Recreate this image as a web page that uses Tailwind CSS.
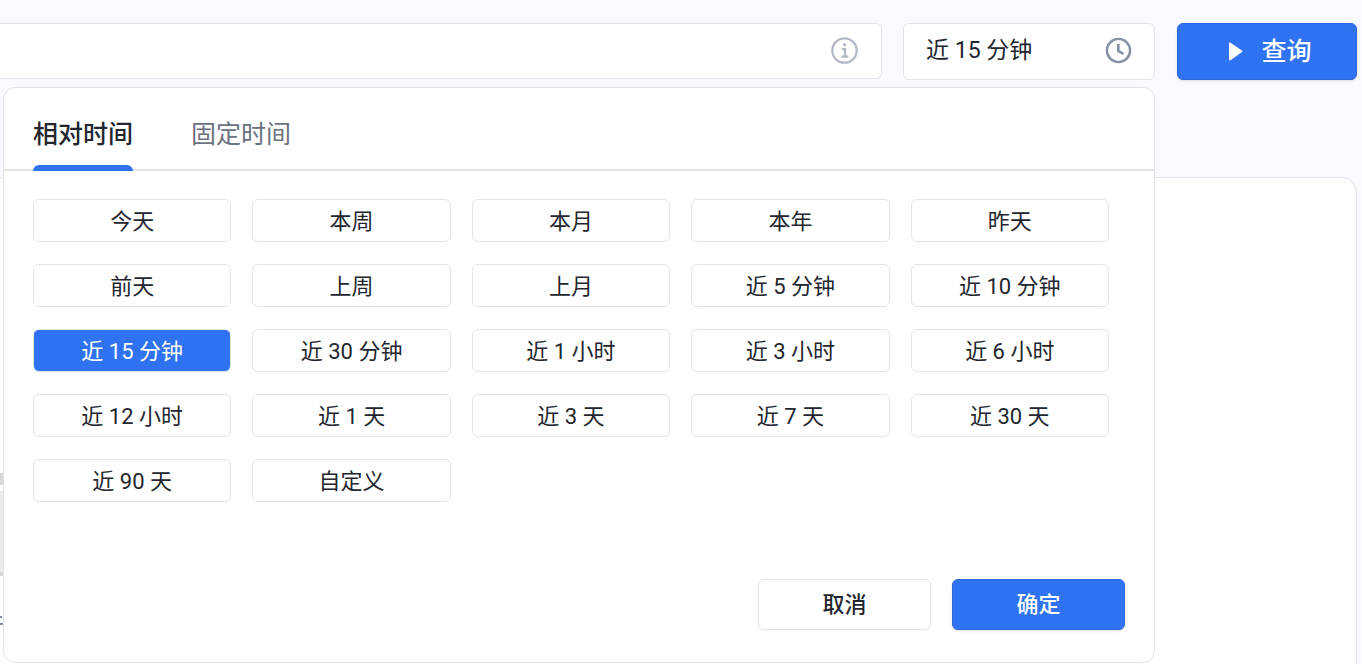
<!DOCTYPE html>
<html lang="zh-CN">
<head>
  <meta charset="UTF-8">
  <meta name="viewport" content="width=device-width, initial-scale=1.0">
  <title>查询</title>
  <script src="https://cdn.jsdelivr.net/npm/@tailwindcss/browser@4"></script>
</head>
<body class="h-screen overflow-hidden flex flex-col bg-[#f9faff] text-[#23262e] font-[Roboto,'Noto_Sans_CJK_SC',sans-serif]">
  <!-- Query bar -->
  <header class="flex items-start pt-[23px] pr-[5px]">
    <div class="flex flex-1 items-center h-14 pr-[23px] bg-white border border-l-0 border-[#e3e4ea] rounded-r-md">
      <input type="text" aria-label="查询语句" class="flex-1 min-w-0 h-full px-4 text-[23px] outline-none">
      <svg class="size-[27px] overflow-visible text-[#b3b8c6]" viewBox="0 1 27 27" fill="none" stroke="currentColor" stroke-width="2.2">
        <circle cx="13.5" cy="13.5" r="12.2"/>
        <circle cx="13.7" cy="7.7" r="1.6" fill="currentColor" stroke="none"/>
        <path d="M10.8 12h3.2v7.6M10.5 19.6h6.8"/>
      </svg>
    </div>

    <!-- Time picker -->
    <div class="relative ml-[21px]">
      <button type="button" id="timeBtn" aria-haspopup="dialog" aria-expanded="true" class="flex items-center justify-between w-[252px] h-[57px] px-[22px] bg-white border border-[#e3e4ea] rounded-md text-[23px]">
        <span id="timeLabel">近 15 分钟</span>
        <svg class="size-[27px] overflow-visible text-[#8590a2]" viewBox="0 1 27 27" fill="none" stroke="currentColor" stroke-width="2.4">
          <circle cx="13.5" cy="13.5" r="11.6"/>
          <path d="M13.3 7v6.9l5.2 3.1" stroke-width="2.6"/>
        </svg>
      </button>

      <div id="timePanel" role="dialog" aria-label="选择时间" class="absolute z-10 right-0 top-full mt-[7px] w-[1152px] bg-white border border-[#e3e4ea] rounded-xl">
        <div role="tablist" class="flex items-stretch gap-[58px] h-[83px] px-[29px] border-b-2 border-[#e3e4ea] text-[25px]">
          <button type="button" role="tab" aria-selected="true" class="relative pt-3 font-medium after:absolute after:inset-x-0 after:-bottom-0.5 after:h-1.5 after:rounded-t-md after:bg-[#3073f2]">相对时间</button>
          <button type="button" role="tab" aria-selected="false" class="pt-3 text-[#6a7180]">固定时间</button>
        </div>

        <div id="options" class="grid grid-cols-5 gap-x-[21px] gap-y-[22px] pt-7 pl-[29px] pr-[45px] text-[22px]">
          <button type="button" class="h-[43px] pt-0.5 border border-[#e3e4ea] rounded-md">今天</button>
          <button type="button" class="h-[43px] pt-0.5 border border-[#e3e4ea] rounded-md">本周</button>
          <button type="button" class="h-[43px] pt-0.5 border border-[#e3e4ea] rounded-md">本月</button>
          <button type="button" class="h-[43px] pt-0.5 border border-[#e3e4ea] rounded-md">本年</button>
          <button type="button" class="h-[43px] pt-0.5 border border-[#e3e4ea] rounded-md">昨天</button>
          <button type="button" class="h-[43px] pt-0.5 border border-[#e3e4ea] rounded-md">前天</button>
          <button type="button" class="h-[43px] pt-0.5 border border-[#e3e4ea] rounded-md">上周</button>
          <button type="button" class="h-[43px] pt-0.5 border border-[#e3e4ea] rounded-md">上月</button>
          <button type="button" class="h-[43px] pt-0.5 border border-[#e3e4ea] rounded-md">近 5 分钟</button>
          <button type="button" class="h-[43px] pt-0.5 border border-[#e3e4ea] rounded-md">近 10 分钟</button>
          <button type="button" class="h-[43px] pt-0.5 border border-[#e3e4ea] rounded-md bg-[#3073f2] text-white">近 15 分钟</button>
          <button type="button" class="h-[43px] pt-0.5 border border-[#e3e4ea] rounded-md">近 30 分钟</button>
          <button type="button" class="h-[43px] pt-0.5 border border-[#e3e4ea] rounded-md">近 1 小时</button>
          <button type="button" class="h-[43px] pt-0.5 border border-[#e3e4ea] rounded-md">近 3 小时</button>
          <button type="button" class="h-[43px] pt-0.5 border border-[#e3e4ea] rounded-md">近 6 小时</button>
          <button type="button" class="h-[43px] pt-0.5 border border-[#e3e4ea] rounded-md">近 12 小时</button>
          <button type="button" class="h-[43px] pt-0.5 border border-[#e3e4ea] rounded-md">近 1 天</button>
          <button type="button" class="h-[43px] pt-0.5 border border-[#e3e4ea] rounded-md">近 3 天</button>
          <button type="button" class="h-[43px] pt-0.5 border border-[#e3e4ea] rounded-md">近 7 天</button>
          <button type="button" class="h-[43px] pt-0.5 border border-[#e3e4ea] rounded-md">近 30 天</button>
          <button type="button" class="h-[43px] pt-0.5 border border-[#e3e4ea] rounded-md">近 90 天</button>
          <button type="button" class="h-[43px] pt-0.5 border border-[#e3e4ea] rounded-md">自定义</button>
        </div>

        <div class="flex justify-end gap-[21px] pt-[77px] pb-8 pr-[29px] text-[22px] font-medium">
          <button type="button" id="cancelBtn" class="w-[173px] h-[51px] border border-[#e3e4ea] rounded-md shadow-xs">取消</button>
          <button type="button" id="okBtn" class="w-[173px] h-[51px] border border-[#2d68dd] rounded-md bg-[#3073f2] text-white shadow-sm">确定</button>
        </div>
      </div>
    </div>

    <button type="submit" class="flex items-center justify-center gap-[18px] w-[180px] h-[57px] ml-[22px] pl-1.5 border border-[#2d68dd] rounded-md bg-[#3073f2] text-white text-[25px] font-medium shadow-sm">
      <svg class="w-[15px] h-5" viewBox="0 0 15 20" fill="currentColor">
        <path d="M1 1.2Q1 .2 2.4 .8Q3 1 3.6 1.5L14 8.4Q15 9.2 14 10L3.6 17.4Q1 19.2 1 17.4Z"/>
      </svg>
      查询
    </button>
  </header>

  <!-- Result area -->
  <main class="flex-1 mt-[97px] mr-[5px] pt-[295px] bg-white border border-l-0 border-b-0 border-[#e3e4ea] rounded-tr-2xl">
    <div class="w-1 h-3 bg-[#d8d8d8]"></div>
    <div class="w-1 h-[85px] mt-1.5 bg-[#ebebeb] border-b-4 border-[#d8d8d8]"></div>
    <div class="w-0.5 h-0.5 mt-10 bg-[#8590a2]"></div>
    <div class="w-1 h-0.5 mt-[5px] bg-[#8590a2]"></div>
  </main>

  <script>
    const timeBtn = document.getElementById("timeBtn");
    const timePanel = document.getElementById("timePanel");
    const options = document.querySelectorAll("#options button");
    let selected = "近 15 分钟";

    function togglePanel(open) {
      timePanel.classList.toggle("hidden", !open);
      timeBtn.setAttribute("aria-expanded", open);
    }

    timeBtn.addEventListener("click", () => togglePanel(timePanel.classList.contains("hidden")));

    options.forEach(option => {
      option.addEventListener("click", () => {
        options.forEach(o => o.classList.remove("bg-[#3073f2]", "text-white"));
        option.classList.add("bg-[#3073f2]", "text-white");
        selected = option.textContent;
      });
    });

    document.getElementById("cancelBtn").addEventListener("click", () => togglePanel(false));
    document.getElementById("okBtn").addEventListener("click", () => {
      document.getElementById("timeLabel").textContent = selected;
      togglePanel(false);
    });
  </script>
</body>
</html>
